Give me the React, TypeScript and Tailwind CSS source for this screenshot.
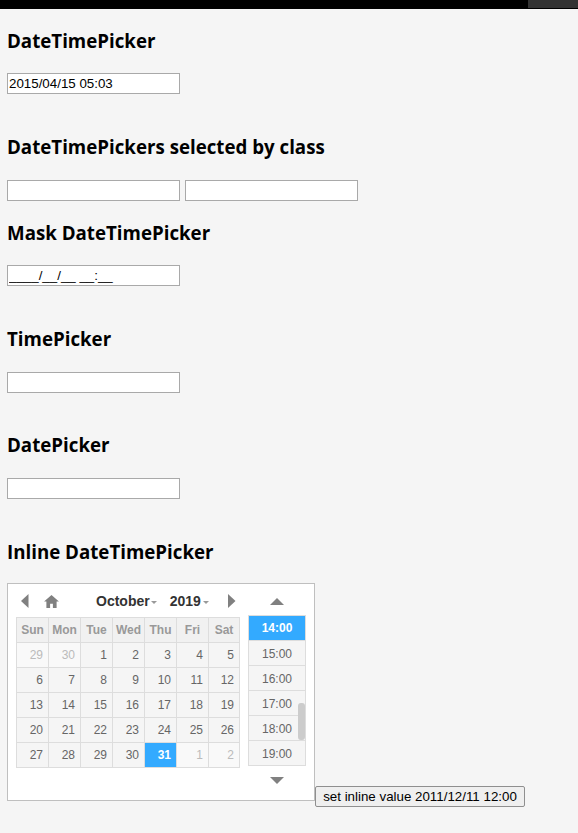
const WEEK_DAYS = ['Sun', 'Mon', 'Tue', 'Wed', 'Thu', 'Fri', 'Sat'];

const WEEKS = [
  [29, 30, 1, 2, 3, 4, 5],
  [6, 7, 8, 9, 10, 11, 12],
  [13, 14, 15, 16, 17, 18, 19],
  [20, 21, 22, 23, 24, 25, 26],
  [27, 28, 29, 30, 31, 1, 2],
];

const TIMES = ['14:00', '15:00', '16:00', '17:00', '18:00', '19:00'];

const heading = "font-['Open_Sans',sans-serif] text-[18.72px] leading-[24px] font-bold text-black";
const field =
  "block h-[21px] w-[173px] border border-[#a9a9a9] bg-white px-[1px] font-['Liberation_Sans',sans-serif] text-[13.33px] text-black outline-none";

export default function App() {
  return (
    <div className="relative h-[833px] w-[578px] overflow-hidden bg-[#f5f5f5] font-['Liberation_Sans',sans-serif]">
      <div className="flex h-[9px] justify-end bg-black">
        <div className="h-[8px] w-[50px] bg-[#333333]" />
      </div>

      <div className="pl-[7px]">
        <h3 className={`${heading} mt-[20px]`}>DateTimePicker</h3>
        <input className={`${field} mt-[20px]`} defaultValue="2015/04/15 05:03" />

        <h3 className={`${heading} mt-[41px]`}>DateTimePickers selected by class</h3>
        <div className="mt-[21px] flex gap-[5px]">
          <input className={field} />
          <input className={field} />
        </div>

        <h3 className={`${heading} mt-[20px]`}>Mask DateTimePicker</h3>
        <input className={`${field} mt-[20px]`} defaultValue="____/__/__ __:__" />

        <h3 className={`${heading} mt-[41px]`}>TimePicker</h3>
        <input className={`${field} mt-[21px]`} />

        <h3 className={`${heading} mt-[40px]`}>DatePicker</h3>
        <input className={`${field} mt-[21px]`} />

        <h3 className={`${heading} mt-[41px]`}>Inline DateTimePicker</h3>

        <div className="mt-[19px] flex items-end">
          <Calendar />
          <button className="mb-[-6px] h-[21px] w-[210px] rounded-[2px] border border-[#8f8f8f] bg-[#efefef] text-center text-[13.33px] leading-[19px] text-black">
            set inline value 2011/12/11 12:00
          </button>
        </div>
      </div>
    </div>
  );
}

function Calendar() {
  return (
    <div className="flex h-[218px] w-[308px] border border-[#bfbfbf] bg-white pl-[8px] pt-[8px]">
      <div className="w-[225px]">
        <div className="flex h-[25px] items-center pb-[7px] text-[14px] font-bold text-[#333333]">
          <svg width="8" height="14" viewBox="0 0 8 14" className="ml-[5px]">
            <path d="M7.5 0V14L0 7Z" fill="#808080" />
          </svg>
          <svg width="15" height="13" viewBox="0 0 16 14" className="ml-[15px]">
            <path d="M8 0 16 7H13.5V14H9.5V9.5H6.5V14H2.5V7H0Z" fill="#808080" />
          </svg>
          <span className="ml-[37px]">October</span>
          <Caret className="ml-[1px]" />
          <span className="ml-[13px]">2019</span>
          <Caret className="ml-[2px]" />
          <svg width="8" height="14" viewBox="0 0 8 14" className="ml-[19px]">
            <path d="M0 0V14L7.5 7Z" fill="#808080" />
          </svg>
        </div>
        <table className="border-collapse table-fixed">
          <thead>
            <tr>
              {WEEK_DAYS.map((d, i) => (
                <th
                  key={d}
                  className={`h-[25px] border border-[#dddddd] bg-[#f1f1f1] p-0 text-center text-[12px] font-bold text-[#999999] ${
                    i === 6 ? 'w-[31px]' : 'w-[32px]'
                  }`}
                >
                  {d}
                </th>
              ))}
            </tr>
          </thead>
          <tbody>
            {WEEKS.map((week, w) => (
              <tr key={w}>
                {week.map((day, i) => {
                  const outside = (w === 0 && day > 20) || (w === 4 && day < 10);
                  const current = w === 4 && day === 31;
                  return (
                    <td
                      key={i}
                      className={`h-[25px] border border-[#dddddd] p-0 pr-[5px] text-right text-[12px] ${
                        current
                          ? 'bg-[#33aaff] font-bold text-white'
                          : outside
                            ? 'bg-[#f9f9f9] text-[#bbbbbb]'
                            : 'bg-[#f5f5f5] text-[#666666]'
                      }`}
                    >
                      {day}
                    </td>
                  );
                })}
              </tr>
            ))}
          </tbody>
        </table>
      </div>

      <div className="ml-[7px] w-[58px]">
        <div className="flex h-[23px] items-center justify-center pb-[5px]">
          <svg width="14" height="7" viewBox="0 0 14 7">
            <path d="M7 0 14 7H0Z" fill="#808080" />
          </svg>
        </div>
        <div className="relative h-[151px] border border-[#dddddd]">
          {TIMES.map((t, i) => (
            <div
              key={t}
              className={`flex h-[25px] items-center justify-center border-b border-[#dddddd] text-[12px] last:h-[24px] last:border-b-0 ${
                i === 0 ? 'bg-[#33aaff] font-bold text-white' : 'bg-[#f5f5f5] pt-[1px] text-[#666666]'
              }`}
            >
              {t}
            </div>
          ))}
          <div className="absolute top-[87px] right-0 h-[37px] w-[7px] rounded-[3px] bg-[#cccccc]" />
        </div>
        <div className="flex h-[28px] items-center justify-center">
          <svg width="14" height="7" viewBox="0 0 14 7">
            <path d="M0 0H14L7 7Z" fill="#808080" />
          </svg>
        </div>
      </div>
    </div>
  );
}

function Caret({ className }: { className: string }) {
  return (
    <svg width="6" height="3" viewBox="0 0 6 3" className={`${className} mt-[2px]`}>
      <path d="M0 0H6L3 3Z" fill="#999999" />
    </svg>
  );
}
